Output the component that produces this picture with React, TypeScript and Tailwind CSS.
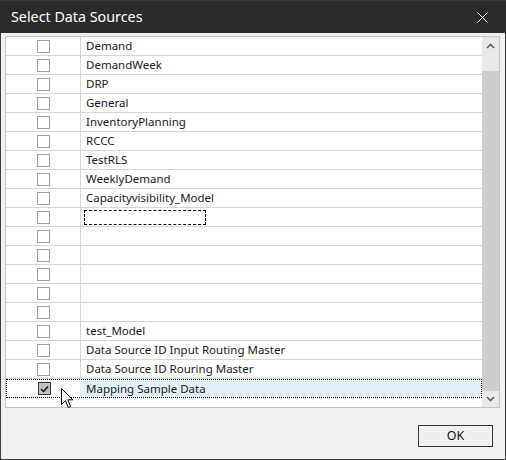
const sources = [
  'Demand',
  'DemandWeek',
  'DRP',
  'General',
  'InventoryPlanning',
  'RCCC',
  'TestRLS',
  'WeeklyDemand',
  'Capacityvisibility_Model',
  '__editing__',
  '',
  '',
  '',
  '',
  '',
  'test_Model',
  'Data Source ID Input Routing Master',
  'Data Source ID Rouring Master',
  'Mapping Sample Data',
];

function CheckBox({ checked }: { checked?: boolean }) {
  if (checked) {
    return (
      <span className="w-[13px] h-[13px] border border-[#333] bg-[#c2c2c2] flex items-center justify-center">
        <svg width="9" height="8" viewBox="0 0 9 8">
          <path d="M1 4 L3.5 6.5 L8 1.5" fill="none" stroke="#1e1e1e" strokeWidth="1.6" />
        </svg>
      </span>
    );
  }
  return <span className="w-[13px] h-[13px] border border-[#a2a2a2] bg-white" />;
}

function Row({ name, index }: { name: string; index: number }) {
  const selected = index === sources.length - 1;
  return (
    <li
      className={
        selected
          ? 'h-[19px] flex border border-dotted border-black'
          : 'h-[19px] flex border-b border-[#d6d6d6]'
      }
    >
      <div
        className={
          selected
            ? 'w-[74px] flex items-center justify-center pl-[1px] border-r border-[#e1eff9]'
            : 'w-[75px] flex items-center justify-center pl-[1px] border-r border-[#d6d6d6]'
        }
      >
        <CheckBox checked={selected} />
      </div>
      <div
        className={
          selected
            ? 'flex-1 flex items-center pl-[5px] bg-[#e3f0fa] text-[#1a1a1a]'
            : 'flex-1 flex items-center pl-[5px] text-[#1a1a1a]'
        }
      >
        {name === '__editing__' ? (
          <span className="ml-[-2px] mt-[1px] w-[122px] h-[15px] border border-dashed border-black" />
        ) : (
          name
        )}
      </div>
    </li>
  );
}

function Cursor() {
  return (
    <svg
      className="absolute left-[60px] top-[388px]"
      width="13"
      height="21"
      viewBox="0 0 13 21"
    >
      <path
        d="M0.5 0.5 L0.5 16.5 L4.5 12.7 L7.3 19.5 L9.6 18.5 L6.9 11.8 L11.9 11.8 Z"
        fill="#fff"
        stroke="#000"
        strokeWidth="1"
        strokeLinejoin="miter"
      />
    </svg>
  );
}

export default function App() {
  return (
    <div
      className="relative w-[506px] h-[460px] flex flex-col bg-[#f0f0f0] border-x border-b border-[#3c3c3c] text-[11.5px]"
      style={{ fontFamily: '"Segoe UI", "Noto Sans", sans-serif' }}
    >
      <header className="h-[33px] -mx-px bg-[#2b2b2b] border-t border-[#3a3a3a] flex items-center justify-between pl-[11px] pr-[18px]">
        <h1 className="text-white text-[14.3px] leading-none">Select Data Sources</h1>
        <svg width="11" height="11" viewBox="0 0 11 11">
          <path d="M0.5 0.5 L10.5 10.5 M10.5 0.5 L0.5 10.5" stroke="#fff" strokeWidth="1" />
        </svg>
      </header>

      <section className="pl-[4px] pr-[5px] pt-[3px]">
        <div className="h-[372px] flex border border-[#c4c4c4] bg-white">
          <ul className="flex-1 flex flex-col">
            {sources.map((name, i) => (
              <Row key={i} name={name} index={i} />
            ))}
          </ul>
          <div className="w-[17px] flex flex-col bg-[#e9e9e9]">
            <div className="h-[17px] flex items-center justify-center">
              <svg width="9" height="6" viewBox="0 0 9 6">
                <path d="M1 5 L4.5 1.5 L8 5" fill="none" stroke="#606060" strokeWidth="1.6" />
              </svg>
            </div>
            <div className="h-[17px]" />
            <div className="flex-1 bg-[#cdcdcd]" />
            <div className="h-[16px] flex items-center justify-center">
              <svg width="9" height="6" viewBox="0 0 9 6">
                <path d="M1 1 L4.5 4.5 L8 1" fill="none" stroke="#606060" strokeWidth="1.6" />
              </svg>
            </div>
          </div>
        </div>
      </section>

      <footer className="flex-1 flex justify-end items-start pt-[17px] pr-[12px]">
        <button className="w-[75px] h-[22px] border border-[#3b3b3b] bg-[#efefef] text-[12.5px] text-[#111]">
          OK
        </button>
      </footer>

      <Cursor />
    </div>
  );
}
